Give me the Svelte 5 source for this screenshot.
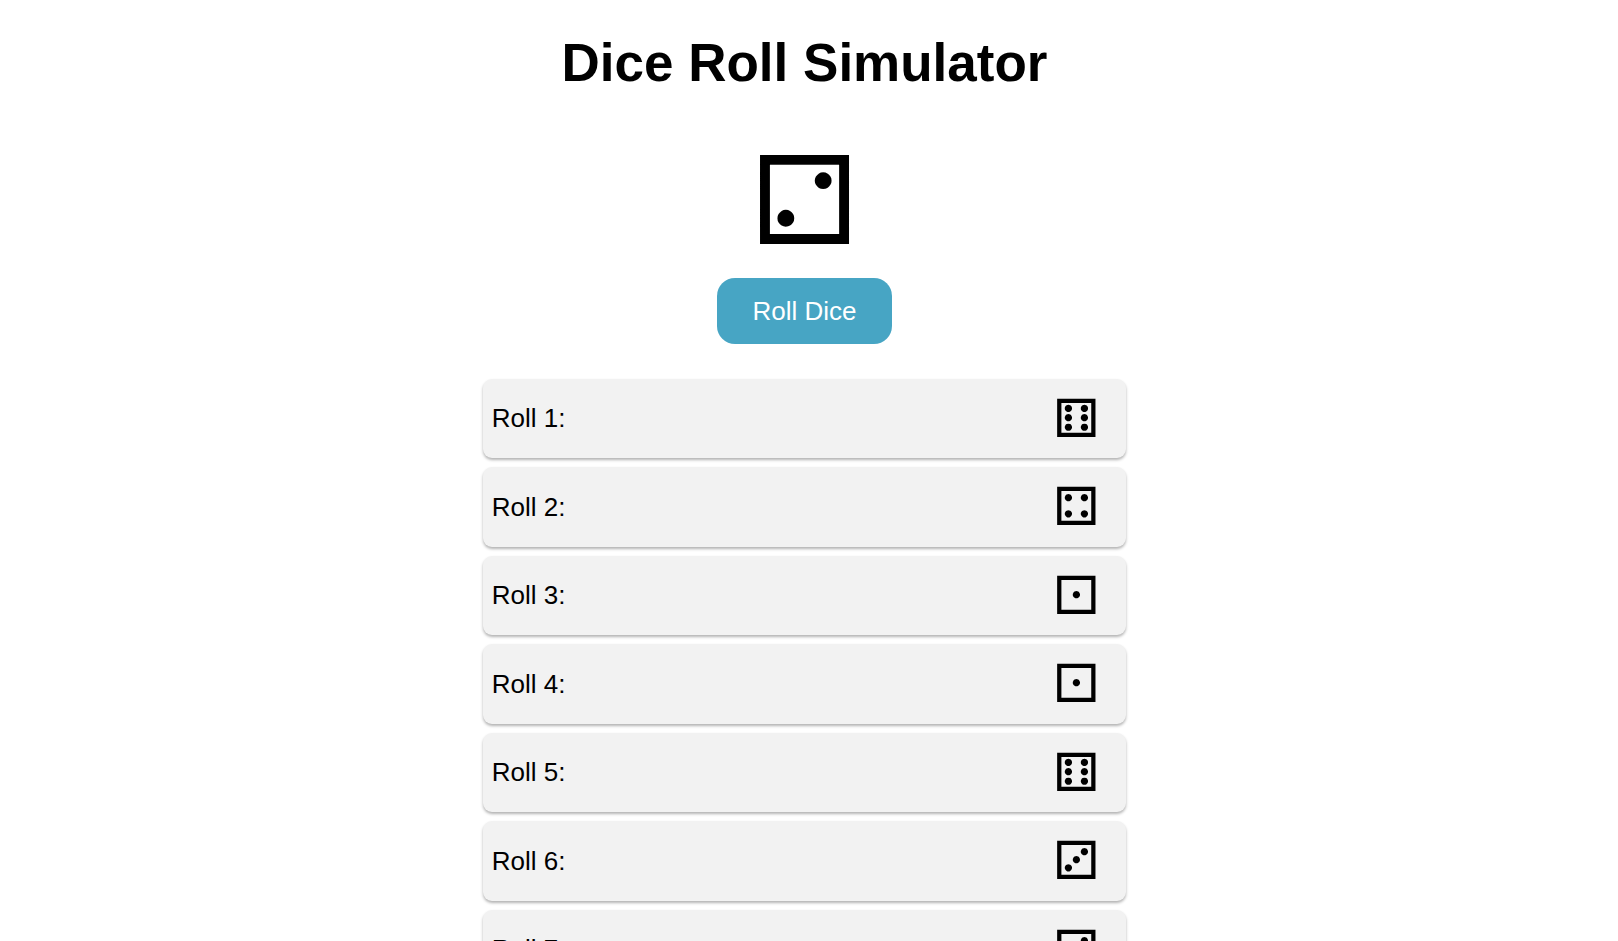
<script>
  const faces = ['⚀', '⚁', '⚂', '⚃', '⚄', '⚅'];

  let current = $state(2);
  let rolls = $state([6, 4, 1, 1, 6, 3, 2]);

  function roll() {
    current = Math.floor(Math.random() * 6) + 1;
    rolls.push(current);
  }
</script>

<main>
  <h1>Dice Roll Simulator</h1>
  <div class="dice">{faces[current - 1]}</div>
  <button type="button" onclick={roll}>Roll Dice</button>
  <ul>
    {#each rolls as value, i}
      <li>Roll {i + 1}: <span>{faces[value - 1]}</span></li>
    {/each}
  </ul>
</main>

<style>
  :global(html) {
    height: 100%;
    overflow: hidden;
  }

  :global(body) {
    height: 100%;
    margin: 0;
    overflow-y: auto;
    scrollbar-width: none;
    background: #fff;
  }

  main {
    display: flex;
    flex-direction: column;
    align-items: center;
    padding-right: 9px;
    font-family: "Liberation Sans", Arial, sans-serif;
    font-size: 26px;
    color: #000;
  }

  h1 {
    margin: 33px 0 0;
    font-size: 53px;
    line-height: 60px;
    text-align: center;
  }

  .dice {
    margin: 39px 0 6px;
    font-family: "DejaVu Sans", sans-serif;
    font-size: 123px;
    line-height: 140px;
  }

  button {
    padding: 18px 35px;
    border: none;
    border-radius: 18px;
    background: #47a5c4;
    color: #fff;
    font: inherit;
    line-height: 30px;
    cursor: pointer;
  }

  ul {
    width: 40%;
    margin: 35px 0;
    padding: 0;
    list-style: none;
  }

  li {
    display: flex;
    align-items: center;
    justify-content: space-between;
    margin-bottom: 9px;
    padding: 9px;
    border-radius: 9px;
    background: #f2f2f2;
    box-shadow: 0 2px 3px rgba(0, 0, 0, 0.3);
  }

  span {
    margin-right: 18px;
    font-family: "DejaVu Sans", sans-serif;
    font-size: 53px;
    line-height: 1.16;
  }
</style>
